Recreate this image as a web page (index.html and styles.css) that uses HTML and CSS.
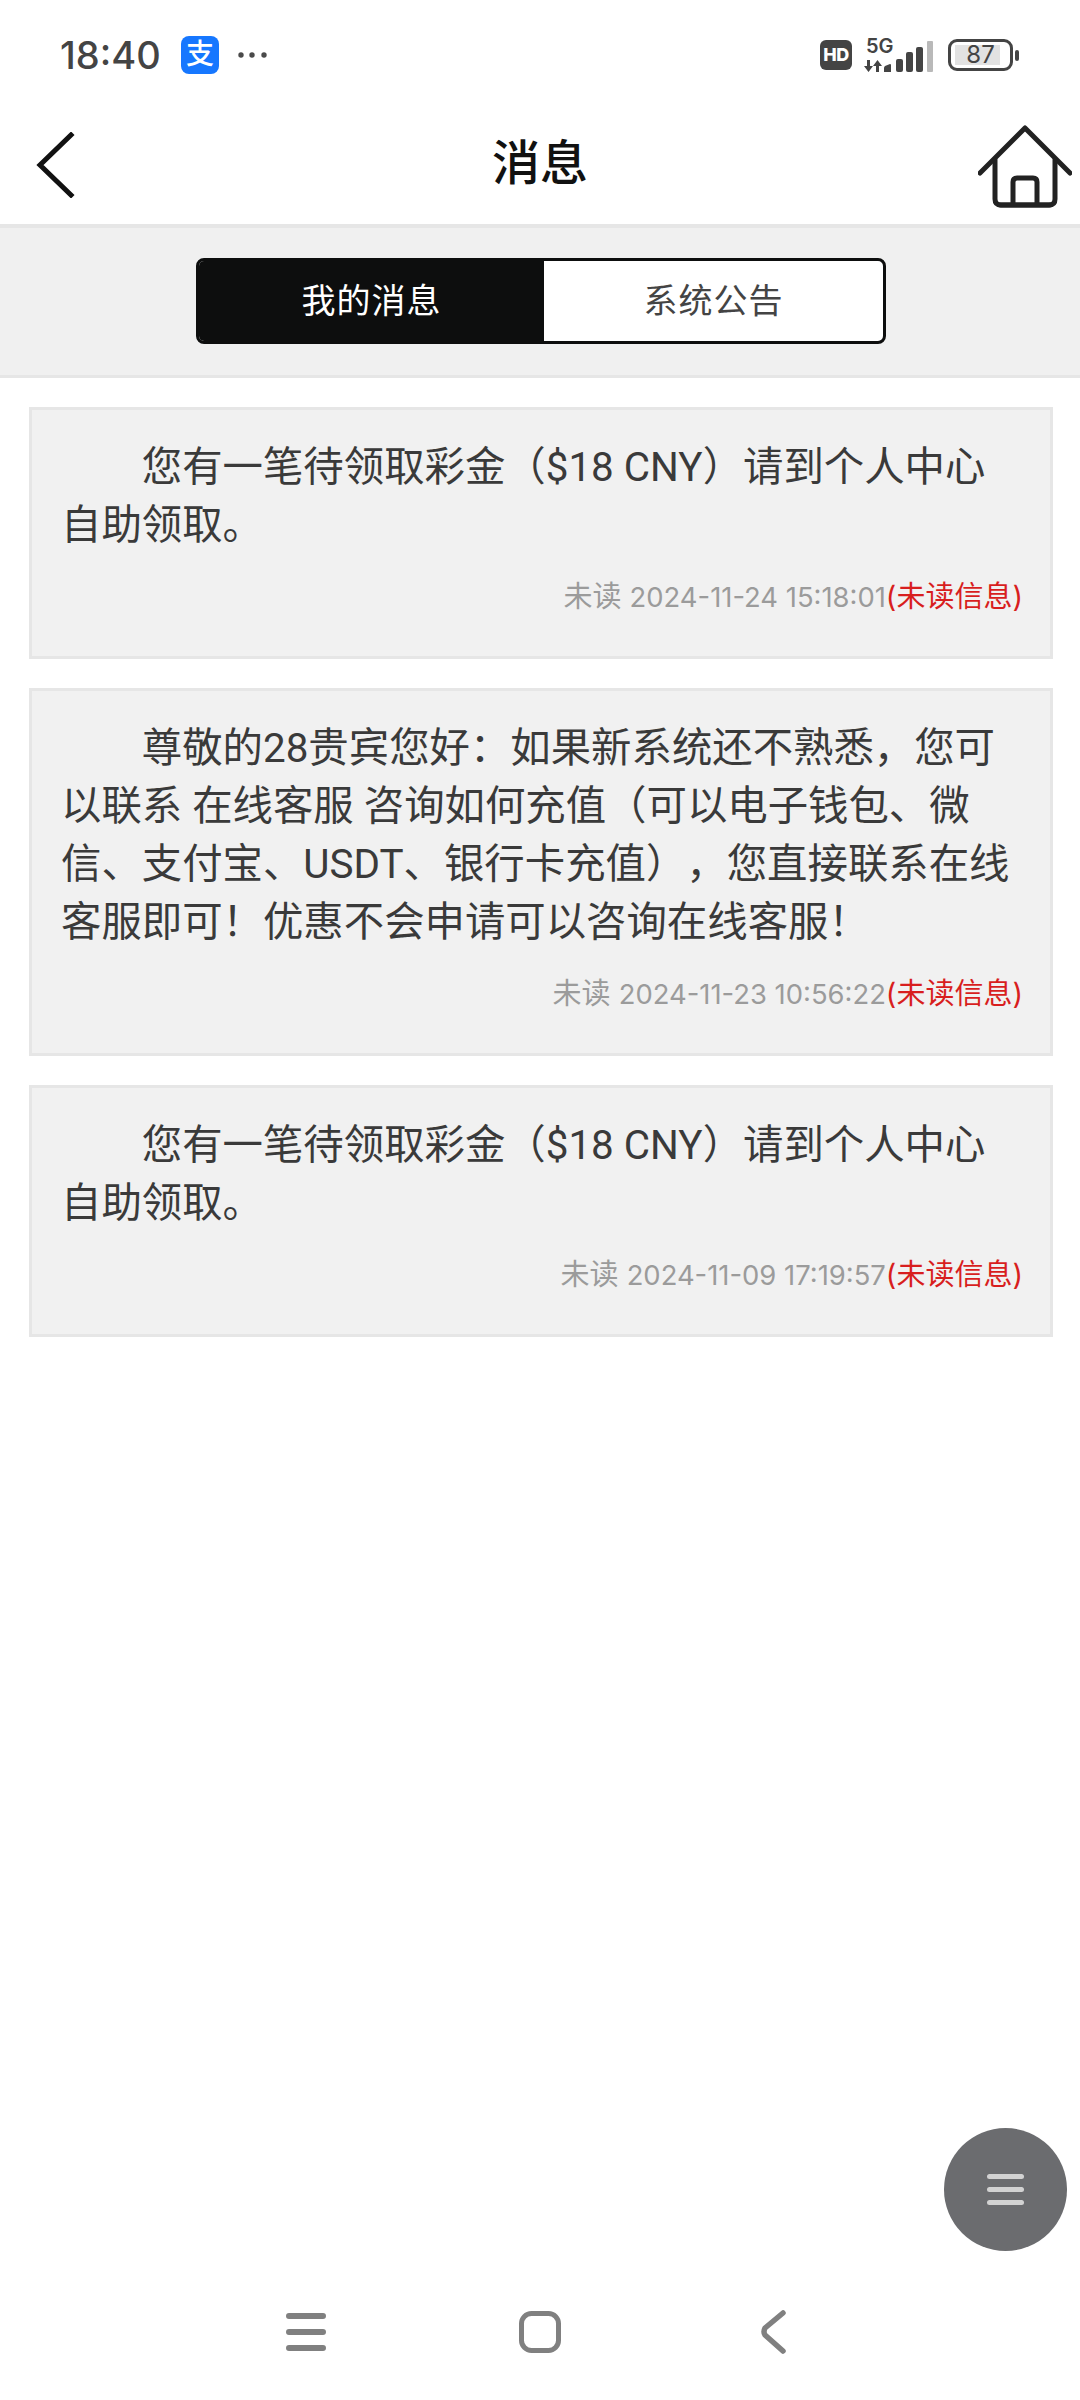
FILE: index.html
```html
<!DOCTYPE html>
<html lang="zh-CN">
<head>
    <meta charset="UTF-8">
    <meta name="viewport" content="width=device-width, initial-scale=1.0">
    <title>消息</title>
    <link rel="stylesheet" href="styles.css">
</head>
<body>
    <div class="pagina">
        <div class="barra-estado">
            <div class="estado-izq">
                <span class="hora">18:40</span>
                <span class="icono-alipay">支</span>
                <svg class="puntos" width="30" height="8" viewBox="0 0 30 8" fill="#4a4a4a">
                    <circle cx="4" cy="4" r="2.7"></circle>
                    <circle cx="15" cy="4" r="2.7"></circle>
                    <circle cx="27" cy="4" r="2.7"></circle>
                </svg>
            </div>
            <div class="estado-der">
                <span class="icono-hd">HD</span>
                <div class="red">
                    <span class="red-5g">5G</span>
                    <svg width="70" height="38" viewBox="0 0 70 38" fill="#444">
                        <path d="M3 24h3v6h3l-4.500 6L0 30h3z"></path>
                        <path d="M12 36v-6H9l4.500-6 4.500 6h-3v6z"></path>
                        <path d="M20 36v-4q0-1 1-2l5-2q1 0 1 1v7z"></path>
                        <rect x="32" y="23" width="7" height="13" rx="2"></rect>
                        <rect x="42" y="16" width="7" height="20" rx="2"></rect>
                        <rect x="52" y="11" width="7" height="25" rx="2"></rect>
                        <rect x="63" y="5" width="6" height="31" rx="1" fill="#b9b9b9"></rect>
                    </svg>
                </div>
                <div class="bateria">
                    <div class="bateria-cuerpo"><span class="bateria-carga"></span><span class="bateria-num">87</span></div>
                    <span class="bateria-punta"></span>
                </div>
            </div>
        </div>

        <div class="cabecera">
            <svg class="icono-volver" width="40" height="66" viewBox="0 0 40 66" fill="none" stroke="#111" stroke-width="5" stroke-linecap="square">
                <path d="M36 3 5 33l31 30"></path>
            </svg>
            <div class="titulo">消息</div>
            <svg class="icono-inicio" width="94" height="84" viewBox="0 0 94 84" fill="none" stroke="#222" stroke-width="5" stroke-linecap="round" stroke-linejoin="round">
                <path d="M2 49 47 4l45 45"></path>
                <path d="M17 36v39q0 6 6 6h48q6 0 6-6V36"></path>
                <path d="M35 80V58q0-4 4-4h16q4 0 4 4v22"></path>
                <path d="M22 81h50"></path>
            </svg>
        </div>

        <div class="banda-pestanas">
            <div class="pestanas">
                <div class="pestana activa">我的消息</div>
                <div class="pestana">系统公告</div>
            </div>
        </div>

        <div class="lista">
            <div class="mensaje">
                <p class="mensaje-texto">您有一笔待领取彩金（$18 CNY）请到个人中心自助领取。</p>
                <div class="mensaje-pie">未读 <span class="fecha">2024-11-24 15:18:01</span><span class="no-leido">(未读信息)</span></div>
            </div>
            <div class="mensaje">
                <p class="mensaje-texto">尊敬的28贵宾您好：如果新系统还不熟悉，您可以联系 在线客服 咨询如何充值（可以电子钱包、微信、支付宝、USDT、银行卡充值），您直接联系在线客服即可！优惠不会申请可以咨询在线客服！</p>
                <div class="mensaje-pie">未读 <span class="fecha">2024-11-23 10:56:22</span><span class="no-leido">(未读信息)</span></div>
            </div>
            <div class="mensaje">
                <p class="mensaje-texto">您有一笔待领取彩金（$18 CNY）请到个人中心自助领取。</p>
                <div class="mensaje-pie">未读 <span class="fecha">2024-11-09 17:19:57</span><span class="no-leido">(未读信息)</span></div>
            </div>
        </div>

        <div class="boton-menu">
            <span></span><span></span><span></span>
        </div>

        <div class="barra-nav">
            <svg width="40" height="38" viewBox="0 0 40 38" fill="none" stroke="#808080" stroke-width="6" stroke-linecap="round">
                <path d="M3 3h34M3 19h34M3 35h34"></path>
            </svg>
            <svg width="42" height="44" viewBox="0 0 42 44" fill="none" stroke="#808080" stroke-width="5">
                <rect x="2.500" y="3.500" width="37" height="37" rx="10"></rect>
            </svg>
            <svg width="25" height="44" viewBox="0 0 25 44" fill="none" stroke="#808080" stroke-width="5.500" stroke-linecap="round" stroke-linejoin="round">
                <path d="M22 3 4 18q-2 4 0 7l18 16"></path>
            </svg>
        </div>
    </div>
</body>
</html>
```

FILE: styles.css
```css
* {
    box-sizing: border-box;
}
html, body {
    margin: 0;
    padding: 0;
    background-color: #fff;
}
body {
    font-family: Inter, "Noto Sans CJK SC", sans-serif;
    text-spacing-trim: space-all;
}
.pagina {
    position: relative;
    width: 1080px;
    height: 2400px;
    display: flex;
    flex-direction: column;
    overflow: hidden;
}

/* barra de estado */
.barra-estado {
    height: 110px;
    padding: 0 61px 0 60px;
    display: flex;
    align-items: center;
    justify-content: space-between;
}
.estado-izq, .estado-der {
    display: flex;
    align-items: center;
}
.hora {
    width: 102px;
    font-size: 38px;
    font-weight: 500;
    color: #444;
}
.icono-alipay {
    width: 38px;
    height: 38px;
    margin-left: 19px;
    border-radius: 8px;
    background-color: #1677ff;
    color: #fff;
    font-size: 28px;
    font-weight: 500;
    line-height: 36px;
    text-align: center;
}
.puntos {
    margin-left: 18px;
}
.icono-hd {
    width: 32px;
    height: 30px;
    border-radius: 6px;
    background-color: #444;
    color: #fff;
    font-size: 18px;
    font-weight: 800;
    letter-spacing: -0.5px;
    line-height: 30px;
    text-align: center;
}
.red {
    position: relative;
    width: 70px;
    height: 38px;
    margin-left: 12px;
}
.red svg {
    display: block;
}
.red-5g {
    position: absolute;
    left: 2px;
    top: -2px;
    font-size: 20px;
    font-weight: 600;
    line-height: 24px;
    color: #444;
}
.bateria {
    display: flex;
    align-items: center;
    margin-left: 14px;
}
.bateria-cuerpo {
    position: relative;
    width: 65px;
    height: 32px;
    border: 3px solid #444;
    border-radius: 9px;
    text-align: center;
}
.bateria-carga {
    position: absolute;
    left: 4px;
    top: 3px;
    bottom: 3px;
    width: 45px;
    background-color: #e2e2e2;
}
.bateria-num {
    position: relative;
    display: block;
    font-size: 24px;
    line-height: 26px;
    color: #444;
}
.bateria-punta {
    width: 4px;
    height: 11px;
    margin-left: 2px;
    border-radius: 2px;
    background-color: #444;
}

/* cabecera */
.cabecera {
    height: 118px;
    padding: 0 8px 20px 8px;
    border-bottom: 4px solid #e6e6e6;
    display: grid;
    grid-template-columns: 1fr auto 1fr;
    align-items: center;
}
.titulo {
    font-size: 48px;
    font-weight: 500;
    color: #111;
}
.icono-volver {
    margin: 11px 0 0 27px;
}
.icono-inicio {
    margin-top: 14px;
    justify-self: end;
}

/* pestañas */
.banda-pestanas {
    height: 150px;
    padding: 30px 0 0 196px;
    background-color: #f0f0f0;
    border-bottom: 3px solid #e6e6e6;
}
.pestanas {
    width: 690px;
    height: 86px;
    border: 3px solid #0d0e0e;
    border-radius: 8px;
    background-color: #fff;
    overflow: hidden;
    display: flex;
}
.pestana {
    flex: 1;
    font-size: 34px;
    line-height: 80px;
    text-align: center;
    letter-spacing: 1px;
    color: #444;
}
.pestana.activa {
    flex: none;
    width: 345px;
    background-color: #0d0e0e;
    color: #fff;
}

/* lista de mensajes */
.lista {
    padding: 29px 27px 0 29px;
    display: flex;
    flex-direction: column;
    gap: 29px;
}
.mensaje {
    padding: 29px 27px 0 29px;
    border: 3px solid #e6e6e6;
    background-color: #f1f1f1;
}
.mensaje-texto {
    margin: 0;
    padding-right: 6px;
    font-family: Roboto, "Noto Sans CJK SC", sans-serif;
    font-size: 40.4px;
    line-height: 58px;
    text-indent: 2em;
    color: #3a3a3a;
}
.mensaje-pie {
    height: 101px;
    padding-top: 20px;
    font-size: 29px;
    line-height: 44px;
    text-align: right;
    color: #9b9b9b;
}
.fecha {
    font-size: 27.4px;
}
.no-leido {
    color: #d81e1e;
}

/* botón flotante */
.boton-menu {
    position: absolute;
    left: 944px;
    top: 2128px;
    width: 123px;
    height: 123px;
    border-radius: 50%;
    background-color: #6b6c6f;
    display: flex;
    flex-direction: column;
    align-items: center;
    justify-content: center;
    gap: 8px;
}
.boton-menu span {
    width: 37px;
    height: 5px;
    border-radius: 3px;
    background-color: #d2d2d2;
}

/* barra de navegación */
.barra-nav {
    position: absolute;
    left: 286px;
    top: 2310px;
    height: 44px;
    display: flex;
    align-items: center;
    gap: 193px;
}
.barra-nav svg:last-child {
    margin-left: 7px;
}
```
